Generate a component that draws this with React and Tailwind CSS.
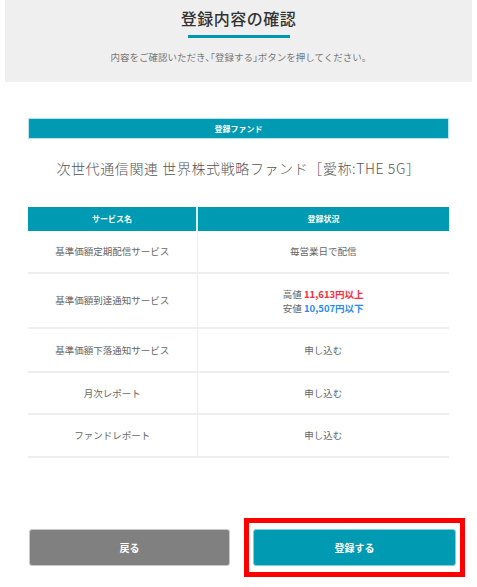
const FONT = { fontFamily: '"Noto Sans CJK JP", "Noto Sans", sans-serif' };

const ROWS = [
  { name: "基準価額定期配信サービス", h: "h-[42px]", status: <span>毎営業日で配信</span> },
  {
    name: "基準価額到達通知サービス",
    h: "h-[55px]",
    status: (
      <div className="flex flex-col items-center leading-[14px]">
        <span>
          高値 <span className="font-bold text-[#ff2a3c]">11,613円以上</span>
        </span>
        <span>
          安値 <span className="font-bold text-[#2a8cf0]">10,507円以下</span>
        </span>
      </div>
    ),
  },
  { name: "基準価額下落通知サービス", h: "h-[44px]", status: <span>申し込む</span> },
  { name: "月次レポート", h: "h-[42px]", status: <span>申し込む</span> },
  { name: "ファンドレポート", h: "h-[43px]", status: <span>申し込む</span> },
];

export default function App() {
  return (
    <div className="w-[477px] h-[587px] bg-white overflow-hidden" style={FONT}>
      <header className="mx-[5px] h-[82px] bg-[#efefef] flex flex-col items-center">
        <h1 className="mt-[6px] text-[16px] leading-[24px] font-medium text-[#333] tracking-[0.5px]">
          登録内容の確認
        </h1>
        <span className="mt-[5px] block w-[102px] h-[3px] bg-[#0097b2]" />
        <p className="mt-[12px] text-[9.5px] leading-[14px] text-[#777]">
          内容をご確認いただき､｢登録する｣ボタンを押してください｡
        </p>
      </header>

      <main className="px-[28px]">
        <div className="mt-[36px] h-[21px] bg-[#009ab3] border border-[#b8e6ee] flex items-center justify-center text-white text-[8px] font-bold">
          登録ファンド
        </div>
        <div className="h-[68px] pb-[10px] flex items-center justify-center text-[14px] font-light text-[#555] tracking-[0.6px]">
          次世代通信関連 世界株式戦略ファンド［愛称:THE 5G］
        </div>

        <table className="w-full border-collapse text-[9.5px] text-[#666]">
          <thead>
            <tr className="h-[24px] bg-[#009ab3] text-white text-[8px] font-bold">
              <th className="w-[169px] border-r-2 border-[#d6eef2] font-bold">サービス名</th>
              <th className="font-bold">登録状況</th>
            </tr>
          </thead>
          <tbody>
            {ROWS.map((r) => (
              <tr key={r.name} className={`${r.h} border-b-2 border-[#eeeeee]`}>
                <td className="text-center border-r border-[#eeeeee]">{r.name}</td>
                <td className="text-center">{r.status}</td>
              </tr>
            ))}
          </tbody>
        </table>
      </main>

      <div className="mt-[60px] flex items-center">
        <button className="ml-[29px] w-[201px] h-[37px] rounded-[3px] bg-[#808080] border border-[#c8c8c8] text-white text-[10px] font-bold">
          戻る
        </button>
        <div className="ml-[14px] border-[5px] border-[#ff0000] px-[4px] py-[6px]">
          <button className="w-[203px] h-[37px] rounded-[3px] bg-[#009ab3] border border-[#7fd0dd] text-white text-[10px] font-bold">
            登録する
          </button>
        </div>
      </div>
    </div>
  );
}
